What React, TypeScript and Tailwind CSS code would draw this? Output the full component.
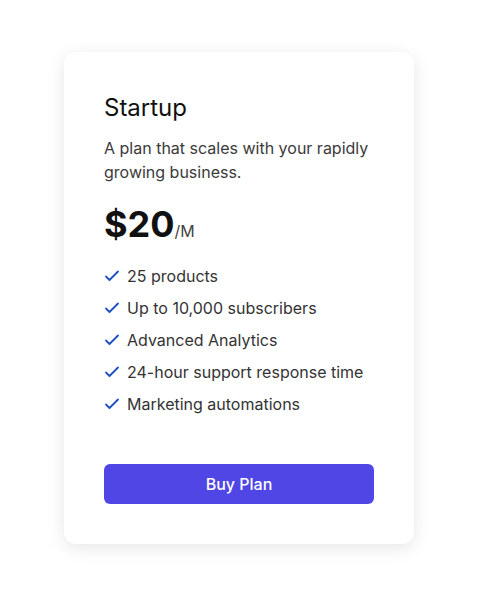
const features = [
  '25 products',
  'Up to 10,000 subscribers',
  'Advanced Analytics',
  '24-hour support response time',
  'Marketing automations',
];

const CheckIcon = () => (
  <svg width="16" height="16" viewBox="0 0 16 16" fill="none" className="shrink-0 text-[#1e4fc0]">
    <path d="M2 8.5l3.5 3.5L14 3.5" stroke="currentColor" strokeWidth="1.8" strokeLinecap="round" strokeLinejoin="round" />
  </svg>
);

const App = () => {
  return (
    <div className="min-h-[598px] w-full bg-white pt-[52px] font-['Inter',sans-serif]">
      <div className="ml-[64px] w-[350px] rounded-xl bg-white p-10 shadow-[0_4px_18px_rgba(0,0,0,0.10)]">
        <h2 className="text-2xl leading-8 font-normal text-[#111]">Startup</h2>
        <p className="mt-3 text-base leading-6 text-[#3a3a3a]">
          A plan that scales with your rapidly growing business.
        </p>
        <div className="mt-5 flex items-baseline">
          <span className="text-4xl leading-10 font-bold text-[#111]">$20</span>
          <span className="text-base text-[#444]">/M</span>
        </div>
        <ul className="mt-5 flex flex-col gap-2">
          {features.map(f => (
            <li key={f} className="flex items-center gap-[7px] text-base leading-6 text-[#333]">
              <CheckIcon />
              {f}
            </li>
          ))}
        </ul>
        <button className="mt-12 h-10 w-full rounded-md bg-[#4f46e5] text-base font-medium text-white">
          Buy Plan
        </button>
      </div>
    </div>
  );
};

export default App;
